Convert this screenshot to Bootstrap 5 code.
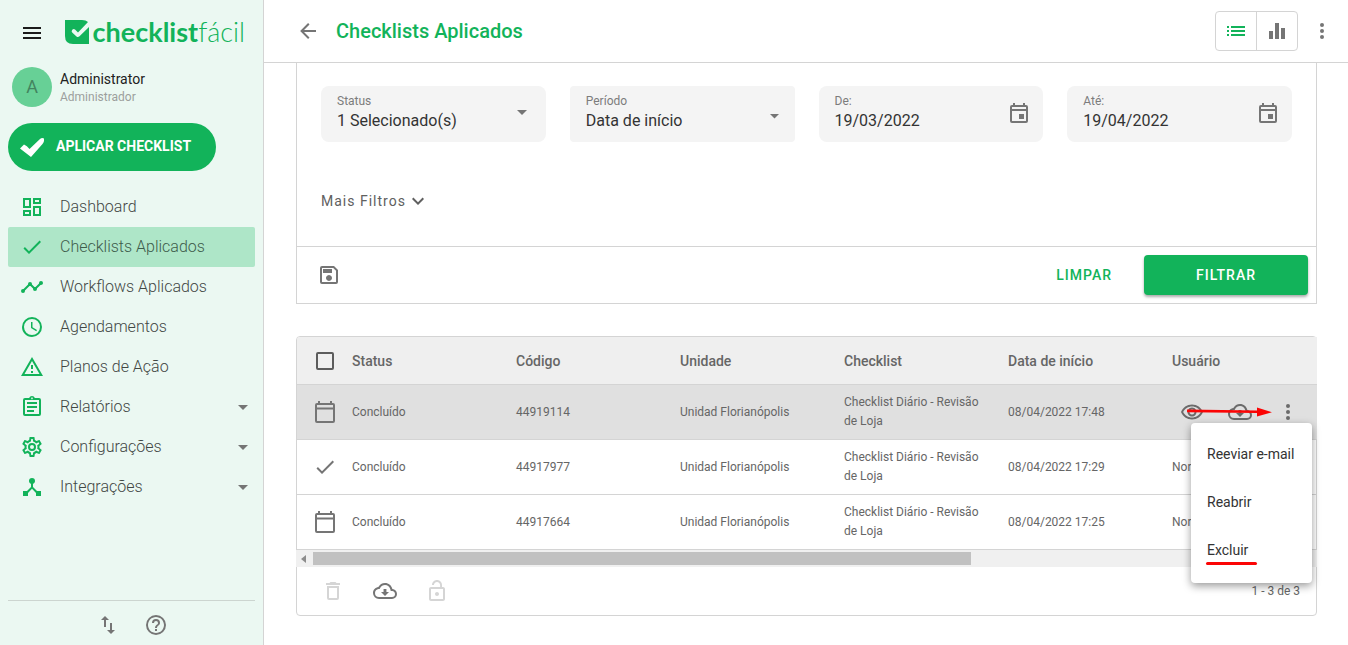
<!DOCTYPE html>
<html lang="pt-BR">
<head>
<meta charset="utf-8">
<meta name="viewport" content="width=device-width, initial-scale=1">
<title>Checklists Aplicados</title>
<link href="https://cdn.jsdelivr.net/npm/bootstrap@5.3.0/dist/css/bootstrap.min.css" rel="stylesheet">
<style>
:root{--brand:#12b35a;--line:#d4d4d4;--ink:#212121;--muted:#666;--icon:#757575}
body{font-family:Roboto,"Liberation Sans",sans-serif;font-size:14px;line-height:20px;color:var(--ink);background:#fff}
svg{display:block;fill:currentColor}
.ico{width:24px;height:24px;flex:none}
.plain{background:none;border:0;padding:0;color:var(--icon)}
.sidebar{width:264px;background:#ebf8f2;border-right:1px solid var(--line);padding:0 8px}
.brandbar{height:63px;padding:0 10px 0 12px}
.brandbar .plain{color:#1b1b1b}
.wordmark{color:var(--brand);font-family:Lato,"Open Sans",sans-serif;font-size:27px;line-height:28px;font-weight:700;text-decoration:none}
.wordmark .thin{font-weight:300}
.profile{padding:4px 4px 0;height:60px}
.avatar{width:40px;height:40px;background:#67d096;color:#43845f;font-size:18px}
.profile-text{padding-top:3px}
.profile-name{line-height:18px;font-size:14px}
.profile-role{line-height:18px;font-size:12px;color:#9c9f9d}
.apply{height:48px;width:208px;background:var(--brand);color:#fff;border:0;border-radius:24px;font-weight:700;padding:0 12px 2px}
.side-link{height:40px;padding:0 0 0 12px;gap:16px;font-size:16px;font-weight:300;color:#424744;text-decoration:none;border-radius:2px}
.side-link .ico{color:var(--brand)}
.side-link .caret{color:var(--icon);margin-left:auto}
.side-link.active{background:#aee6c8;color:#3d5c4b}
.side-foot{height:46px;border-top:1px solid #ccd5d0;gap:24px;color:var(--icon);padding-top:3px}
.topbar{height:63px;border-bottom:1px solid var(--line);padding:0 14px 0 32px}
.topbar h1{font-size:20px;line-height:24px;font-weight:500;color:var(--brand);margin:0}
.switcher{border:1px solid var(--line);border-radius:4px;height:40px}
.switcher button{width:41px;height:38px}
.switcher button:first-child{width:40px}
.switcher button+button{border-left:1px solid var(--line)}
.switcher .on{color:var(--brand)}
.content{padding:0 31px 30px 32px}
.panel{border:1px solid var(--line)}
.filters{border-top:0}
.filter-body{padding:23px 24px 33px}
.fld{position:relative}
.fld label{position:absolute;left:16px;top:6px;font-size:12px;line-height:18px;color:#7c7c7c}
.fld input,.fld select{width:100%;height:56px;border:0;border-radius:8px;background:#f4f4f4;padding:18px 40px 6px 16px;font-size:16px;color:#333;appearance:none;outline:0}
.fld select{padding:20px 40px 6px 16px}
.fld .tight{border-radius:4px}
.fld .mark-icon{position:absolute;right:12px;top:14px;color:var(--icon);pointer-events:none}
.fld input+.mark-icon{top:16px}
.more{margin-top:47px;color:#606060;letter-spacing:1px}
.filter-foot{height:57px;border-top:1px solid var(--line);padding:0 8px 0 20px}
.clear-btn{color:var(--brand);font-weight:500;letter-spacing:1px;margin-right:32px}
.filter-btn{width:164px;height:40px;background:var(--brand);color:#fff;border:0;border-radius:4px;font-weight:500;letter-spacing:1px;box-shadow:0 2px 3px #0005}
.grid-card{position:relative;margin-top:32px;border-radius:4px}
.grid-wrap{overflow:hidden;margin-right:-1px;border-top-left-radius:3px}
.grid-data{width:1531px;table-layout:fixed;border-collapse:separate;border-spacing:0;color:var(--muted);font-size:12px}
.grid-data th,.grid-data td{padding:0 16px 0 0;border-bottom:1px solid var(--line);vertical-align:middle}
.grid-data th{height:48px;font-size:14px;font-weight:500;background:#efefef;color:#666}
.grid-data td{height:55px;line-height:19px}
.grid-data .first{padding:0 0 0 16px;width:55px}
.grid-data .std{width:164px}
.grid-data td .ico{color:var(--icon)}
.grid-data .picked td{background:#e0e0e0}
.pick{appearance:none;display:block;width:18px;height:18px;border:2px solid #5c5c5c;border-radius:2px;margin:0 0 0 3px}
.hbar{height:17px;background:#f0f0f0;margin:0 -1px;padding:0 17px}
.hbar-track{position:relative}
.hbar-thumb{width:calc(100% * 2 / 3);height:13px;background:#c1c1c1}
.hbar-arrow{position:absolute;left:-12px;top:3px;width:5px;height:8px;color:#8c8c8c}
.grid-foot{height:48px;padding:0 16px 0 24px;gap:28px}
.grid-foot button:disabled{color:#d5d5d5}
.total{font-size:12px;color:var(--muted)}
.row-tools{position:absolute;right:4px;top:63px}
.row-tools button{width:48px;display:flex;justify-content:center;color:#6b6b6b}
.pointer-arrow{position:absolute;left:18px;top:4px;width:86px;height:16px;color:#fb0505;pointer-events:none}
.row-menu{position:absolute;right:4px;top:86px;width:121px;padding:7px 0 9px;background:#fff;border-radius:4px;box-shadow:0 3px 8px #0006;z-index:2}
.row-menu button{display:block;width:100%;height:48px;padding:0 0 0 16px;text-align:left;color:#333;white-space:nowrap}
.underlined{position:relative}
.underlined::after{content:"";position:absolute;left:-1px;bottom:-7px;width:51px;height:3px;border-radius:2px;background:#fb0505}
</style>
</head>
<body>
<svg width="0" height="0" class="position-absolute" aria-hidden="true">
<symbol id="i-check" viewBox="0 0 24 24"><path d="M21,7L9,19L3.5,13.5L4.91,12.09L9,16.17L19.59,5.59L21,7Z"/></symbol>
<symbol id="i-down" viewBox="0 0 24 24"><path d="M7,10L12,15L17,10H7Z"/></symbol>
<symbol id="i-dots" viewBox="0 0 24 24"><circle cx="12" cy="6" r="2"/><circle cx="12" cy="12" r="2"/><circle cx="12" cy="18" r="2"/></symbol>
<symbol id="i-event" viewBox="0 0 24 24"><path fill-rule="evenodd" d="M19,3H18V1H16V3H8V1H6V3H5A2,2 0 0,0 3,5V19A2,2 0 0,0 5,21H19A2,2 0 0,0 21,19V5A2,2 0 0,0 19,3M5,5H19V7H5ZM5,9H19V19H5ZM12,12H17V17H12Z"/></symbol>
<symbol id="i-cal" viewBox="0 0 24 24"><path fill-rule="evenodd" d="M20,3H19V1H17V3H7V1H5V3H4A2,2 0 0,0 2,5V21A2,2 0 0,0 4,23H20A2,2 0 0,0 22,21V5A2,2 0 0,0 20,3M4,5H20V7.5H4ZM4,9.500H20V21H4Z"/></symbol>
<symbol id="i-cloud" viewBox="0 0 24 24"><path d="M19.35,10.04C18.67,6.59 15.64,4 12,4C9.11,4 6.6,5.64 5.35,8.04C2.34,8.36 0,10.91 0,14A6,6 0 0,0 6,20H19A5,5 0 0,0 24,15C24,12.36 21.95,10.22 19.35,10.04M19,18H6A4,4 0 0,1 2,14C2,11.95 3.53,10.24 5.56,10.03L6.63,9.92L7.13,8.97C8.08,7.14 9.94,6 12,6C14.62,6 16.88,7.86 17.39,10.43L17.69,11.93L19.22,12.04C20.78,12.14 22,13.45 22,15A3,3 0 0,1 19,18M13.45,10H10.55V13H8L12,17L16,13H13.45V10Z"/></symbol>
</svg>
<div class="d-flex min-vh-100">
<aside class="sidebar d-flex flex-column flex-shrink-0">
  <div class="brandbar d-flex align-items-center">
    <button class="plain" aria-label="Menu"><svg class="ico" viewBox="0 0 24 24"><path d="M3,7H21V9H3V7M3,12H21V14H3V12M3,17H21V19H3V17Z"/></svg></button>
    <a href="#" class="wordmark d-flex align-items-center ms-auto"><svg width="24" height="24" viewBox="0 0 24 24" class="me-1"><path d="M0,0H17Q21,0 23,2L13,12.500L10,9.500Q8.500,8.500 7.300,9.800Q6,11.200 7.200,12.500L11.500,16.500Q13,17.700 14.500,16.300L24,7V24H8Q0,24 0,16Z"/></svg><span>checklist<span class="thin">fácil</span></span></a>
  </div>
  <div class="profile d-flex gap-2">
    <div class="avatar rounded-circle d-flex align-items-center justify-content-center">A</div>
    <div class="profile-text"><div class="profile-name">Administrator</div><div class="profile-role">Administrador</div></div>
  </div>
  <button class="apply d-flex align-items-center gap-2"><svg width="24" height="20" viewBox="0 0 24 20" class="me-1 mt-1"><path d="M0,10.500L4,6.500Q7,7.500 9.500,11L20,1Q22,-.5 24,.5Q24.500,4 22.500,6L11,19Z"/></svg>APLICAR CHECKLIST</button>
  <nav class="pt-3">
    <a href="#" class="side-link d-flex align-items-center"><svg class="ico" viewBox="0 0 24 24"><path d="M19,5V7H15V5H19M9,5V11H5V5H9M19,13V19H15V13H19M9,17V19H5V17H9M21,3H13V9H21V3M11,3H3V13H11V3M21,11H13V21H21V11M11,15H3V21H11V15Z"/></svg>Dashboard</a>
    <a href="#" class="side-link active d-flex align-items-center"><svg class="ico"><use href="#i-check"/></svg>Checklists Aplicados</a>
    <a href="#" class="side-link d-flex align-items-center"><svg class="ico" viewBox="0 0 24 24"><path d="M23,8C23,9.1 22.1,10 21,10C20.82,10 20.65,9.98 20.49,9.93L16.93,13.48C16.98,13.64 17,13.82 17,14A2,2 0 0,1 13,14C13,13.82 13.02,13.64 13.07,13.48L10.52,10.93C10.36,10.98 10.18,11 10,11S9.64,10.98 9.48,10.93L4.93,15.49C4.98,15.65 5,15.82 5,16A2,2 0 1,1 3,14C3.18,14 3.35,14.02 3.51,14.07L8.07,9.52C8.02,9.36 8,9.18 8,9A2,2 0 0,1 12,9C12,9.18 11.98,9.36 11.93,9.52L14.48,12.07C14.64,12.02 14.82,12 15,12S15.36,12.02 15.52,12.07L19.07,8.51C19.02,8.35 19,8.18 19,8A2,2 0 0,1 23,8Z"/></svg>Workflows Aplicados</a>
    <a href="#" class="side-link d-flex align-items-center"><svg class="ico" viewBox="0 0 24 24"><path d="M12,20A8,8 0 0,0 20,12A8,8 0 0,0 12,4A8,8 0 0,0 4,12A8,8 0 0,0 12,20M12,2A10,10 0 0,1 22,12A10,10 0 0,1 12,22C6.47,22 2,17.5 2,12A10,10 0 0,1 12,2M12.5,7V12.25L17,14.92L16.25,16.15L11,13V7H12.5Z"/></svg>Agendamentos</a>
    <a href="#" class="side-link d-flex align-items-center"><svg class="ico" viewBox="0 0 24 24"><path d="M12,2L1,21H23M12,6L19.53,19H4.47M11,10V14H13V10M11,16V18H13V16"/></svg>Planos de Ação</a>
    <a href="#" class="side-link d-flex align-items-center"><svg class="ico" viewBox="0 0 24 24"><path fill-rule="evenodd" d="M19,3H14.82C14.4,1.84 13.3,1 12,1C10.7,1 9.6,1.84 9.18,3H5A2,2 0 0,0 3,5V19A2,2 0 0,0 5,21H19A2,2 0 0,0 21,19V5A2,2 0 0,0 19,3M12,2.600A.8,.8 0 1,1 11.990,2.600M5,5H19V19H5ZM7,7H17V9H7ZM7,11H17V13H7ZM7,15H14V17H7Z"/></svg>Relatórios<svg class="ico caret"><use href="#i-down"/></svg></a>
    <a href="#" class="side-link d-flex align-items-center"><svg class="ico" viewBox="0 0 24 24"><path d="M12,8A4,4 0 0,1 16,12A4,4 0 0,1 12,16A4,4 0 0,1 8,12A4,4 0 0,1 12,8M12,10A2,2 0 0,0 10,12A2,2 0 0,0 12,14A2,2 0 0,0 14,12A2,2 0 0,0 12,10M10,22C9.75,22 9.54,21.82 9.5,21.58L9.13,18.93C8.5,18.68 7.96,18.34 7.44,17.94L4.95,18.95C4.73,19.03 4.46,18.95 4.34,18.73L2.34,15.27C2.21,15.05 2.27,14.78 2.46,14.63L4.57,12.97L4.5,12L4.57,11L2.46,9.37C2.27,9.22 2.21,8.95 2.34,8.73L4.34,5.27C4.46,5.05 4.73,4.96 4.95,5.05L7.44,6.05C7.96,5.66 8.5,5.32 9.13,5.07L9.5,2.42C9.54,2.18 9.75,2 10,2H14C14.25,2 14.46,2.18 14.5,2.42L14.87,5.07C15.5,5.32 16.04,5.66 16.56,6.05L19.05,5.05C19.27,4.96 19.54,5.05 19.66,5.27L21.66,8.73C21.79,8.95 21.73,9.22 21.54,9.37L19.43,11L19.5,12L19.43,13L21.54,14.63C21.73,14.78 21.79,15.05 21.66,15.27L19.66,18.73C19.54,18.95 19.27,19.04 19.05,18.95L16.56,17.95C16.04,18.34 15.5,18.68 14.87,18.93L14.5,21.58C14.46,21.82 14.25,22 14,22H10M11.25,4L10.88,6.61C9.68,6.86 8.62,7.5 7.85,8.39L5.44,7.35L4.69,8.65L6.8,10.2C6.4,11.37 6.4,12.64 6.8,13.8L4.68,15.36L5.43,16.66L7.86,15.62C8.63,16.5 9.68,17.14 10.87,17.38L11.24,20H12.76L13.13,17.39C14.32,17.14 15.37,16.5 16.14,15.62L18.57,16.66L19.32,15.36L17.2,13.81C17.6,12.64 17.6,11.37 17.2,10.2L19.31,8.65L18.56,7.35L16.15,8.39C15.38,7.5 14.32,6.86 13.12,6.62L12.75,4H11.25Z"/></svg>Configurações<svg class="ico caret"><use href="#i-down"/></svg></a>
    <a href="#" class="side-link d-flex align-items-center"><svg class="ico" viewBox="0 0 24 24"><path d="M17,16L13,12V8.82C14.16,8.4 15,7.3 15,6A3,3 0 0,0 9,6C9,7.3 9.84,8.4 11,8.82V12L7,16H3V21H8V17.95L12,13.75L16,17.95V21H21V16H17Z"/></svg>Integrações<svg class="ico caret"><use href="#i-down"/></svg></a>
  </nav>
  <div class="side-foot d-flex align-items-center justify-content-center mt-auto">
    <button class="plain" aria-label="Importar e exportar"><svg class="ico" viewBox="0 0 24 24"><path d="M9,3L5,7H8V14H10V7H13M16,17V10H14V17H11L15,21L19,17H16Z"/></svg></button>
    <button class="plain" aria-label="Ajuda"><svg class="ico" viewBox="0 0 24 24"><path d="M11,18H13V16H11V18M12,2A10,10 0 0,0 2,12A10,10 0 0,0 12,22A10,10 0 0,0 22,12A10,10 0 0,0 12,2M12,20C7.59,20 4,16.41 4,12C4,7.59 7.59,4 12,4C16.41,4 20,7.59 20,12C20,16.41 16.41,20 12,20M12,6A4,4 0 0,0 8,10H10A2,2 0 0,1 12,8A2,2 0 0,1 14,10C14,12 11,11.75 11,15H13C13,12.75 16,12.5 16,10A4,4 0 0,0 12,6Z"/></svg></button>
  </div>
</aside>
<main class="flex-fill overflow-hidden">
  <header class="topbar d-flex align-items-center">
    <button class="plain me-3" aria-label="Voltar"><svg class="ico" viewBox="0 0 24 24"><path d="M20,11V13H8L13.5,18.5L12.08,19.92L4.16,12L12.08,4.08L13.5,5.5L8,11H20Z"/></svg></button>
    <h1>Checklists Aplicados</h1>
    <div class="switcher d-flex ms-auto me-2">
      <button class="plain on d-flex align-items-center justify-content-center" aria-label="Lista"><svg class="ico" viewBox="0 0 24 24"><path d="M3,13H5V11H3M3,17H5V15H3M3,9H5V7H3M7,13H21V11H7M7,17H21V15H7M7,7V9H21V7"/></svg></button>
      <button class="plain d-flex align-items-center justify-content-center" aria-label="Gráficos"><svg class="ico" viewBox="0 0 24 24"><path d="M10,20H14V4H10V20M4,20H8V12H4V20M16,9V20H20V9H16Z"/></svg></button>
    </div>
    <button class="plain ms-1" aria-label="Mais opções"><svg class="ico"><use href="#i-dots"/></svg></button>
  </header>
  <div class="content">
    <section class="panel filters">
      <div class="filter-body">
        <div class="row g-4">
          <div class="col-3"><div class="fld"><label for="f-status">Status</label><select id="f-status"><option>1 Selecionado(s)</option></select><svg class="ico mark-icon"><use href="#i-down"/></svg></div></div>
          <div class="col-3"><div class="fld"><label for="f-periodo">Período</label><select id="f-periodo" class="tight"><option>Data de início</option></select><svg class="mark-icon mt-1" width="18" height="24" viewBox="0 0 18 24"><path d="M5,10H14L9.500,14.500Z"/></svg></div></div>
          <div class="col-3"><div class="fld"><label for="f-de">De:</label><input id="f-de" type="text" value="19/03/2022"><svg class="ico mark-icon"><use href="#i-event"/></svg></div></div>
          <div class="col-3"><div class="fld"><label for="f-ate">Até:</label><input id="f-ate" type="text" value="19/04/2022"><svg class="ico mark-icon"><use href="#i-event"/></svg></div></div>
        </div>
        <button class="plain more d-flex align-items-center">Mais Filtros<svg class="ico" viewBox="0 0 24 24"><path d="M7.41,8.58L12,13.17L16.59,8.58L18,10L12,16L6,10L7.41,8.58Z"/></svg></button>
      </div>
      <div class="filter-foot d-flex align-items-center">
        <button class="plain" aria-label="Salvar filtro"><svg class="ico" viewBox="0 0 24 24"><path fill-rule="evenodd" d="M5,3H17L21,7V19A2,2 0 0,1 19,21H5A2,2 0 0,1 3,19V5A2,2 0 0,1 5,3M5,5V19H19V7.800L16.200,5ZM6,6H15V10H6ZM12,12A3,3 0 1,1 11.990,12Z"/></svg></button>
        <button class="plain clear-btn ms-auto">LIMPAR</button>
        <button class="filter-btn">FILTRAR</button>
      </div>
    </section>
    <section class="panel grid-card">
      <div class="grid-wrap">
        <table class="grid-data">
          <thead><tr><th class="first"><input class="pick" type="checkbox" aria-label="Selecionar todos"></th><th class="std">Status</th><th class="std">Código</th><th class="std">Unidade</th><th class="std">Checklist</th><th class="std">Data de início</th><th>Usuário</th></tr></thead>
          <tbody>
            <tr class="picked"><td class="first"><svg class="ico"><use href="#i-cal"/></svg></td><td>Concluído</td><td>44919114</td><td>Unidad Florianópolis</td><td>Checklist Diário - Revisão de Loja</td><td>08/04/2022 17:48</td><td></td></tr>
            <tr><td class="first"><svg class="ico"><use href="#i-check"/></svg></td><td>Concluído</td><td>44917977</td><td>Unidad Florianópolis</td><td>Checklist Diário - Revisão de Loja</td><td>08/04/2022 17:29</td><td>Nor</td></tr>
            <tr><td class="first"><svg class="ico"><use href="#i-cal"/></svg></td><td>Concluído</td><td>44917664</td><td>Unidad Florianópolis</td><td>Checklist Diário - Revisão de Loja</td><td>08/04/2022 17:25</td><td>Nor</td></tr>
          </tbody>
        </table>
      </div>
      <div class="hbar d-flex align-items-center"><div class="hbar-track flex-fill"><svg class="hbar-arrow" viewBox="0 0 5 8"><path d="M5,0V8L0,4Z"/></svg><div class="hbar-thumb"></div></div></div>
      <div class="grid-foot d-flex align-items-center">
        <button class="plain" disabled aria-label="Remover"><svg class="ico" viewBox="0 0 24 24"><path d="M6,19A2,2 0 0,0 8,21H16A2,2 0 0,0 18,19V7H6V19M8,9H16V19H8V9M15.5,4L14.5,3H9.5L8.5,4H5V6H19V4H15.5Z"/></svg></button>
        <button class="plain" aria-label="Baixar"><svg class="ico"><use href="#i-cloud"/></svg></button>
        <button class="plain" disabled aria-label="Desbloquear"><svg class="ico" viewBox="0 0 24 24"><path fill-rule="evenodd" d="M12,17C13.1,17 14,16.1 14,15S13.1,13 12,13 10,13.900 10,15 10.900,17 12,17M18,8H17V6C17,3.240 14.760,1 12,1S7,3.240 7,6H8.900C8.900,4.290 10.290,2.900 12,2.900S15.100,4.290 15.100,6V8H6C4.900,8 4,8.900 4,10V20C4,21.100 4.900,22 6,22H18C19.100,22 20,21.100 20,20V10C20,8.900 19.100,8 18,8M18,20H6V10H18V20Z"/></svg></button>
        <span class="total ms-auto">1 - 3 de 3</span>
      </div>
      <div class="row-tools d-flex">
        <button class="plain" aria-label="Visualizar"><svg class="ico" viewBox="0 0 24 24"><path fill-rule="evenodd" d="M12,4.500C17,4.500 21.270,7.610 23,12C21.270,16.390 17,19.500 12,19.500C7,19.500 2.730,16.390 1,12C2.730,7.610 7,4.500 12,4.500M3.180,12C4.830,15.360 8.240,17.500 12,17.500C15.760,17.500 19.170,15.360 20.820,12C19.170,8.640 15.760,6.500 12,6.500C8.240,6.500 4.830,8.640 3.180,12ZM12,7.500A4.500,4.500 0 1,1 11.990,7.500ZM12,9.500A2.500,2.500 0 1,0 12.010,9.500Z"/></svg></button>
        <button class="plain" aria-label="Baixar"><svg class="ico"><use href="#i-cloud"/></svg></button>
        <button class="plain" aria-label="Mais ações"><svg class="ico"><use href="#i-dots"/></svg></button>
        <svg class="pointer-arrow" viewBox="0 0 86 16"><path d="M1,5.500L71,6.500V3.500L86,8.300L71,12.500V9L1,8.200Z"/></svg>
      </div>
      <div class="row-menu">
        <button class="plain">Reeviar e-mail</button>
        <button class="plain">Reabrir</button>
        <button class="plain"><span class="underlined">Excluir</span></button>
      </div>
    </section>
  </div>
</main>
</div>
<script src="https://cdn.jsdelivr.net/npm/bootstrap@5.3.0/dist/js/bootstrap.bundle.min.js"></script>
</body>
</html>
